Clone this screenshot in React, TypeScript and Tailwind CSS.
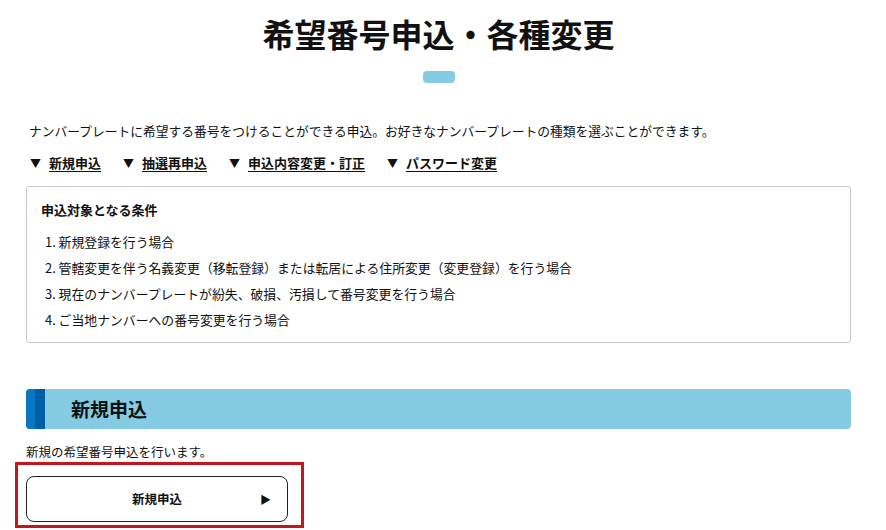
import React from "react"

const links = ["新規申込", "抽選再申込", "申込内容変更・訂正", "パスワード変更"]

const conditions = [
  "新規登録を行う場合",
  "管轄変更を伴う名義変更（移転登録）または転居による住所変更（変更登録）を行う場合",
  "現在のナンバープレートが紛失、破損、汚損して番号変更を行う場合",
  "ご当地ナンバーへの番号変更を行う場合",
]

export default function App() {
  return (
    <div
      className="min-h-[530px] bg-white text-[#111]"
      style={{ fontFamily: '"Noto Sans CJK JP", "Noto Sans", sans-serif' }}
    >
      <div className="ml-[26px] w-[825px]">
        {/* タイトル */}
        <h1 className="pt-[9px] text-center text-[32px] leading-[48px] font-bold">
          希望番号申込・各種変更
        </h1>
        <div className="mx-auto mt-[14px] h-[12px] w-[32px] rounded-[4px] bg-[#85cbe3]" />

        {/* 説明 */}
        <p className="mt-[38px] pl-[3px] text-[12.75px] leading-[20px]">
          ナンバープレートに希望する番号をつけることができる申込。お好きなナンバープレートの種類を選ぶことができます。
        </p>

        {/* ページ内リンク */}
        <div className="mt-[12px] flex gap-[22px] pl-[4px] text-[13px] leading-[20px] font-bold">
          {links.map((l) => (
            <a key={l} href="#" className="flex items-center gap-[8px]">
              <span className="text-[11px]">▼</span>
              <span className="underline underline-offset-[3px]">{l}</span>
            </a>
          ))}
        </div>

        {/* 条件 */}
        <div className="mt-[13px] rounded-[3px] border border-[#c8c8c8] px-[14px] pt-[13px] pb-[9px]">
          <h2 className="text-[13px] leading-[20px] font-bold">申込対象となる条件</h2>
          <ol className="mt-[9px] pl-[4px] text-[12.85px]">
            {conditions.map((c, i) => (
              <li key={c} className="leading-[26px]">
                {i + 1}. {c}
              </li>
            ))}
          </ol>
        </div>

        {/* 新規申込 */}
        <div className="mt-[46px] flex h-[40px] overflow-hidden rounded-[4px] bg-[#85cbe3]">
          <div className="w-[9px] bg-[#0a77c2]" />
          <div className="w-[10px] bg-[#005fa6]" />
          <h2 className="ml-[26px] self-center text-[19px] leading-[26px] font-bold">新規申込</h2>
        </div>

        <p className="mt-[13px] text-[12.5px] leading-[20px]">新規の希望番号申込を行います。</p>

        <div className="-ml-[11px] w-[289px] border-[3px] border-[#c4161c] px-[8px] pt-[11px] pb-[3px]">
          <button className="relative flex h-[46px] w-[262px] items-center justify-center rounded-[8px] border border-[#222] bg-white text-[12.5px] font-bold">
            新規申込
            <span className="absolute right-[16px] text-[11px]">▶</span>
          </button>
        </div>
      </div>
    </div>
  )
}
